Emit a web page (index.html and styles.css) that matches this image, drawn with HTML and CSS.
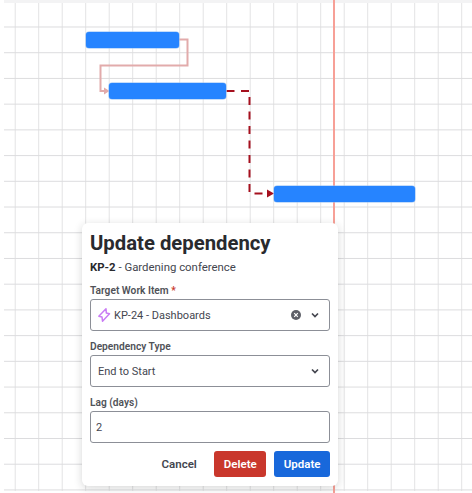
FILE: index.html
```html
<!DOCTYPE html>
<html lang="en">
<head>
<meta charset="utf-8">
<title>Update dependency</title>
<link rel="stylesheet" href="styles.css">
</head>
<body>
<div class="timeline">
  <div class="grid"></div>
  <div class="today"></div>
  <svg class="links" width="472" height="493" viewBox="0 0 472 493" fill="none">
    <path class="link-muted" d="M179 39.5H187.5V65.5H100.5V91H106"/>
    <path class="arrow-muted" d="M104 87.5L109.5 91L104 94.5Z"/>
    <path class="link-active" d="M226.5 91H249.5V193.5H267"/>
    <path class="arrow-active" d="M267 189.5L274 193.5L267 197.5Z"/>
  </svg>
  <div class="bar bar-one"></div>
  <div class="bar bar-two"></div>
  <div class="bar bar-three"></div>
</div>
<section class="dialog">
  <h1 class="title">Update dependency</h1>
  <p class="subtitle"><strong>KP-2</strong> - Gardening conference</p>
  <div class="field">
    <div class="label">Target Work Item <span class="req">*</span></div>
    <div class="control">
      <svg class="type-icon" width="16" height="16" viewBox="0 0 16 16" fill="none"><path d="M10 1.8L10.3 6L13.5 6.8L6.5 14.2L6 10L2.8 9.2Z" stroke="#c97cf4" stroke-width="1.5" stroke-linejoin="round"/></svg>
      <span class="value">KP-24 - Dashboards</span>
      <svg class="clear" width="12" height="12" viewBox="0 0 12 12"><circle cx="6" cy="6" r="5" fill="#5e6068"/><path d="M4.2 4.2L7.8 7.8M7.8 4.2L4.2 7.8" stroke="#fff" stroke-width="1.2"/></svg>
      <svg class="chev" width="10" height="10" viewBox="0 0 10 10" fill="none"><path d="M2 3.5L5 6.5L8 3.5" stroke="#44464f" stroke-width="1.7"/></svg>
    </div>
  </div>
  <div class="field">
    <div class="label">Dependency Type</div>
    <div class="control">
      <span class="value flush">End to Start</span>
      <svg class="chev" width="10" height="10" viewBox="0 0 10 10" fill="none"><path d="M2 3.5L5 6.5L8 3.5" stroke="#44464f" stroke-width="1.7"/></svg>
    </div>
  </div>
  <div class="field">
    <div class="label">Lag (days)</div>
    <div class="control lag"><span class="value">2</span></div>
  </div>
  <div class="actions">
    <button class="btn btn-plain">Cancel</button>
    <button class="btn btn-danger">Delete</button>
    <button class="btn btn-primary">Update</button>
  </div>
</section>
</body>
</html>
```
FILE: styles.css
```css
html, body {
  margin: 0;
  padding: 0;
  background: #fff;
  width: 472px;
  height: 493px;
  overflow: hidden;
  font-family: Roboto, "Noto Sans", sans-serif;
  color: #292a2e;
}
.timeline {
  position: absolute;
  inset: 0;
}
.grid {
  position: absolute;
  left: 4px;
  top: 0;
  right: 0;
  bottom: 2px;
  background-image:
    linear-gradient(to bottom, #f3f3f4 0, #f3f3f4 3px, transparent 3px),
    linear-gradient(to bottom, transparent 24.4px, #dcdcde 24.4px),
    linear-gradient(to right, transparent 22.2px, #e2e2e4 22.2px);
  background-size: 100% 100%, 100% 25.72px, 23.5px 100%;
  background-position: 0 0, 0 1.78px, 11.7px 0;
  background-repeat: no-repeat, repeat-y, repeat-x;
}
.today {
  position: absolute;
  left: 333px;
  top: 0;
  width: 2px;
  bottom: 0;
  background: #f7a097;
  z-index: 2;
}
.links {
  position: absolute;
  left: 0;
  top: 0;
  z-index: 3;
}
.link-muted {
  stroke: #e2abab;
  stroke-width: 2;
}
.arrow-muted {
  fill: #e2abab;
}
.link-active {
  stroke: #a5101e;
  stroke-width: 2;
  stroke-dasharray: 8 6.5;
}
.arrow-active {
  fill: #a5101e;
}
.bar {
  position: absolute;
  height: 16px;
  background: #2684ff;
  border-radius: 3px;
  box-shadow: 0 0 0 0.5px #8dbcf5;
  z-index: 4;
}
.bar-one { left: 86px; top: 32px; width: 93px; }
.bar-two { left: 109px; top: 83px; width: 117px; }
.bar-three { left: 273.5px; top: 186px; width: 141px; }
.dialog {
  position: absolute;
  left: 82px;
  top: 223px;
  width: 240px;
  height: 247px;
  padding: 8px;
  background: #fff;
  border-radius: 6px;
  box-shadow: 0 2px 8px rgba(30, 31, 33, 0.18);
  z-index: 5;
  display: flex;
  flex-direction: column;
}
.title {
  margin: 0;
  font-size: 20.3px;
  line-height: 24px;
  font-weight: 700;
}
.subtitle {
  margin: 5px 0 0;
  font-size: 11.4px;
  line-height: 15px;
  color: #44464f;
}
.subtitle strong {
  color: #292a2e;
}
.field {
  margin-top: 9px;
  display: flex;
  flex-direction: column;
  gap: 1px;
}
.label {
  font-size: 10.2px;
  line-height: 14px;
  font-weight: 600;
  color: #505258;
}
.req {
  color: #c9372c;
}
.control {
  box-sizing: border-box;
  height: 32px;
  border: 1px solid #8c8f97;
  border-radius: 3px;
  display: flex;
  align-items: center;
  padding: 0 9px 0 5px;
  font-size: 11px;
  color: #44464f;
}
.type-icon {
  margin-right: 2px;
}
.value {
  flex: 1;
}
.flush {
  padding-left: 2px;
}
.clear {
  margin-right: 8px;
}
.actions {
  margin-top: 8px;
  display: flex;
  justify-content: flex-end;
  gap: 8px;
}
.btn {
  box-sizing: border-box;
  height: 26px;
  border: 0;
  border-radius: 3px;
  font-family: inherit;
  font-size: 11.5px;
  font-weight: 600;
  padding: 0 9.5px;
}
.btn-plain {
  background: transparent;
  color: #44464f;
}
.btn-danger {
  background: #c9372c;
  color: #fff;
}
.btn-primary {
  background: #1868db;
  color: #fff;
}
```
